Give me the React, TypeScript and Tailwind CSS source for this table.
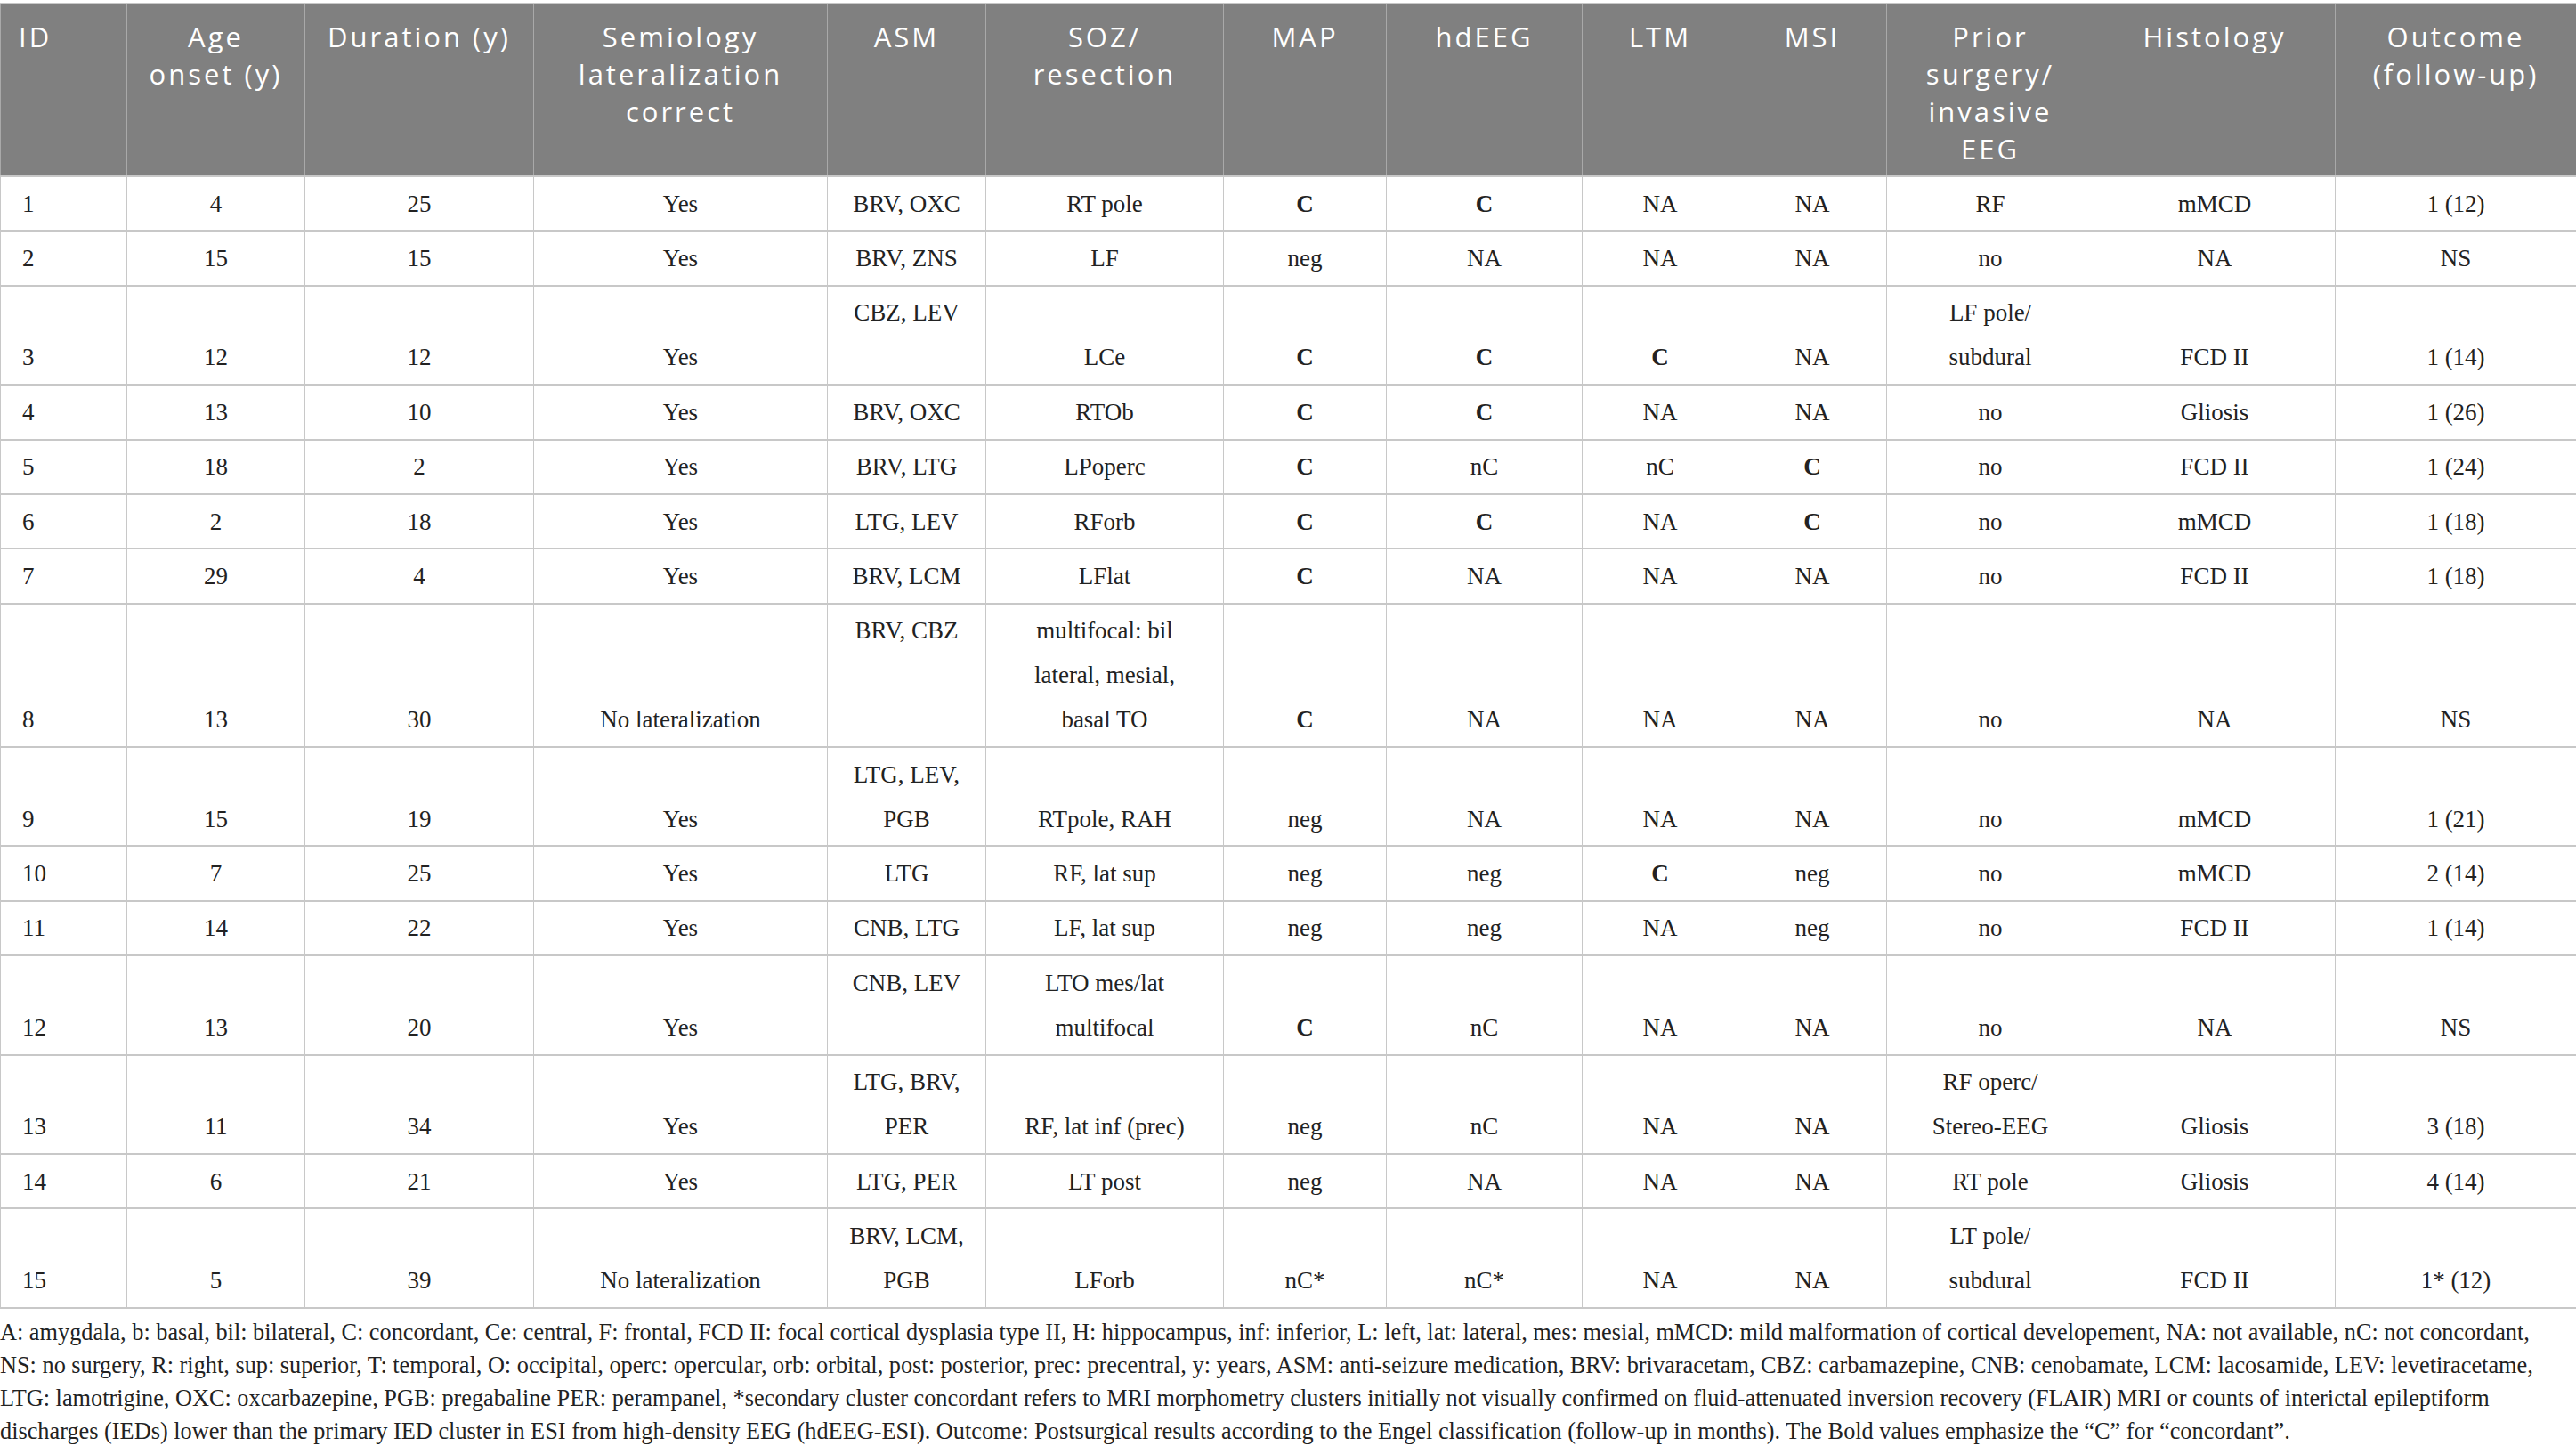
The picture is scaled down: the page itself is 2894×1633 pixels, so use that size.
const COL_WIDTHS = [142, 200, 257, 330, 178, 267, 183, 220, 175, 167, 233, 271, 271];

const HEADERS = [
  "ID",
  "Age\nonset (y)",
  "Duration (y)",
  "Semiology\nlateralization\ncorrect",
  "ASM",
  "SOZ/\nresection",
  "MAP",
  "hdEEG",
  "LTM",
  "MSI",
  "Prior\nsurgery/\ninvasive\nEEG",
  "Histology",
  "Outcome\n(follow-up)",
];

const ROWS: string[][] = [
  ["1", "4", "25", "Yes", "BRV, OXC", "RT pole", "C", "C", "NA", "NA", "RF", "mMCD", "1 (12)"],
  ["2", "15", "15", "Yes", "BRV, ZNS", "LF", "neg", "NA", "NA", "NA", "no", "NA", "NS"],
  ["3", "12", "12", "Yes", "CBZ, LEV", "LCe", "C", "C", "C", "NA", "LF pole/\nsubdural", "FCD II", "1 (14)"],
  ["4", "13", "10", "Yes", "BRV, OXC", "RTOb", "C", "C", "NA", "NA", "no", "Gliosis", "1 (26)"],
  ["5", "18", "2", "Yes", "BRV, LTG", "LPoperc", "C", "nC", "nC", "C", "no", "FCD II", "1 (24)"],
  ["6", "2", "18", "Yes", "LTG, LEV", "RForb", "C", "C", "NA", "C", "no", "mMCD", "1 (18)"],
  ["7", "29", "4", "Yes", "BRV, LCM", "LFlat", "C", "NA", "NA", "NA", "no", "FCD II", "1 (18)"],
  ["8", "13", "30", "No lateralization", "BRV, CBZ", "multifocal: bil\nlateral, mesial,\nbasal TO", "C", "NA", "NA", "NA", "no", "NA", "NS"],
  ["9", "15", "19", "Yes", "LTG, LEV,\nPGB", "RTpole, RAH", "neg", "NA", "NA", "NA", "no", "mMCD", "1 (21)"],
  ["10", "7", "25", "Yes", "LTG", "RF, lat sup", "neg", "neg", "C", "neg", "no", "mMCD", "2 (14)"],
  ["11", "14", "22", "Yes", "CNB, LTG", "LF, lat sup", "neg", "neg", "NA", "neg", "no", "FCD II", "1 (14)"],
  ["12", "13", "20", "Yes", "CNB, LEV", "LTO mes/lat\nmultifocal", "C", "nC", "NA", "NA", "no", "NA", "NS"],
  ["13", "11", "34", "Yes", "LTG, BRV,\nPER", "RF, lat inf (prec)", "neg", "nC", "NA", "NA", "RF operc/\nStereo-EEG", "Gliosis", "3 (18)"],
  ["14", "6", "21", "Yes", "LTG, PER", "LT post", "neg", "NA", "NA", "NA", "RT pole", "Gliosis", "4 (14)"],
  ["15", "5", "39", "No lateralization", "BRV, LCM,\nPGB", "LForb", "nC*", "nC*", "NA", "NA", "LT pole/\nsubdural", "FCD II", "1* (12)"],
];

const FOOTNOTE = [
  "A: amygdala, b: basal, bil: bilateral, C: concordant, Ce: central, F: frontal, FCD II: focal cortical dysplasia type II, H: hippocampus, inf: inferior, L: left, lat: lateral, mes: mesial, mMCD: mild malformation of cortical developement, NA: not available, nC: not concordant,",
  "NS: no surgery, R: right, sup: superior, T: temporal, O: occipital, operc: opercular, orb: orbital, post: posterior, prec: precentral, y: years, ASM: anti-seizure medication, BRV: brivaracetam, CBZ: carbamazepine, CNB: cenobamate, LCM: lacosamide, LEV: levetiracetame,",
  "LTG: lamotrigine, OXC: oxcarbazepine, PGB: pregabaline PER: perampanel, *secondary cluster concordant refers to MRI morphometry clusters initially not visually confirmed on fluid-attenuated inversion recovery (FLAIR) MRI or counts of interictal epileptiform",
  "discharges (IEDs) lower than the primary IED cluster in ESI from high-density EEG (hdEEG-ESI). Outcome: Postsurgical results according to the Engel classification (follow-up in months). The Bold values emphasize the \u201cC\u201d for \u201cconcordant\u201d.",
];

const HeaderCell = ({ label, index }: { label: string; index: number }) => (
  <th
    className={
      index === 0
        ? "border-x border-[#a9a9a9] bg-[#808080] pl-[20px] pr-2 pt-[15px] pb-[9px] text-left align-top font-normal whitespace-pre-line"
        : "border-x border-[#a9a9a9] bg-[#808080] px-1 pt-[15px] pb-[9px] text-center align-top font-normal whitespace-pre-line"
    }
  >
    {label}
  </th>
);

const BodyCell = ({ value, index }: { value: string; index: number }) => {
  const bold = value === "C";
  let cls =
    "border-x border-y-2 border-[#c8c8c8] py-[4.7px] whitespace-pre-line ";
  if (index === 0) cls += "pl-[24px] pr-2 text-left align-bottom";
  else if (index === 4) cls += "px-2 text-center align-top";
  else cls += "px-2 text-center align-bottom";
  if (bold) cls += " font-bold";
  return <td className={cls}>{value}</td>;
};

export default function App() {
  return (
    <div className="w-[2894px] bg-white pt-[3px] text-[#222]">
      <table className="w-full table-fixed border-collapse border-t-2 border-[#c8c8c8]">
        <colgroup>
          {COL_WIDTHS.map((w, i) => (
            <col key={i} style={{ width: w }} />
          ))}
        </colgroup>
        <thead>
          <tr className="font-['Open_Sans',sans-serif] text-[31px] leading-[42px] tracking-[3px] text-white">
            {HEADERS.map((h, i) => (
              <HeaderCell key={i} label={h} index={i} />
            ))}
          </tr>
        </thead>
        <tbody className="font-['Liberation_Serif',serif] text-[27px] leading-[50px]">
          {ROWS.map((row, r) => (
            <tr key={r}>
              {row.map((v, c) => (
                <BodyCell key={c} value={v} index={c} />
              ))}
            </tr>
          ))}
        </tbody>
      </table>
      <div className="pt-[8px] font-['Liberation_Serif',serif] text-[26.3px] leading-[37px]">
        {FOOTNOTE.map((line, i) => (
          <p key={i} className="whitespace-nowrap">
            {line}
          </p>
        ))}
      </div>
    </div>
  );
}
